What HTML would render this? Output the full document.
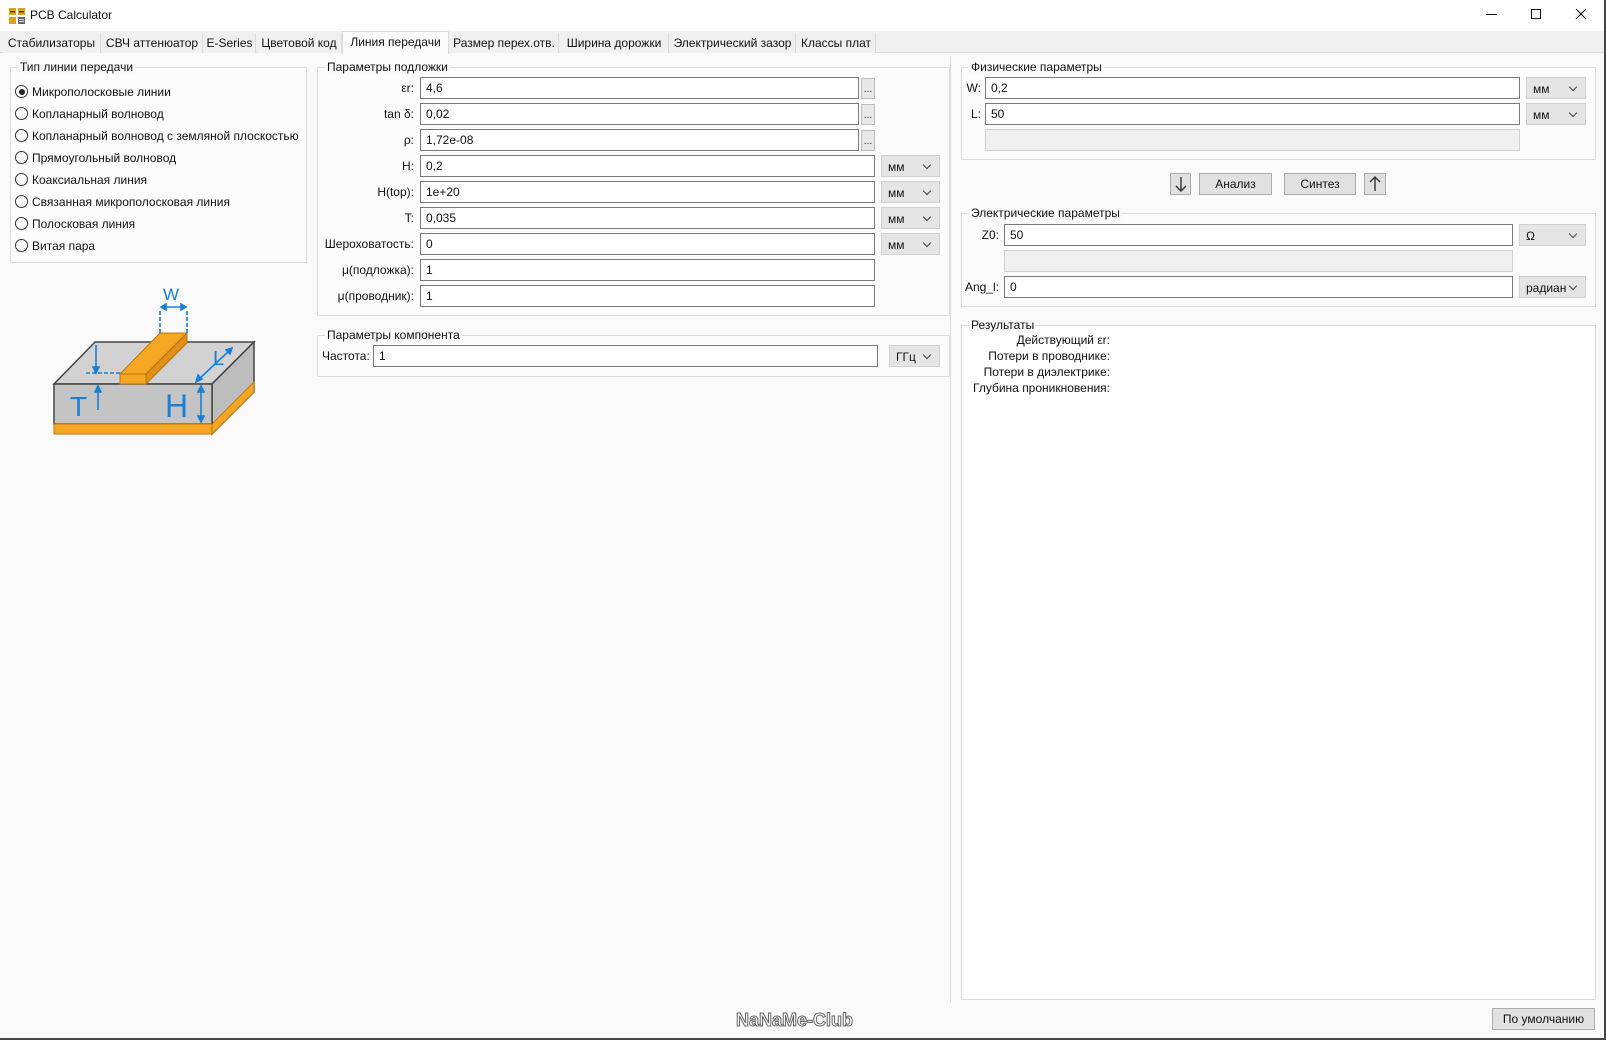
<!DOCTYPE html>
<html><head><meta charset="utf-8"><style>
*{box-sizing:border-box;margin:0;padding:0}
body{width:1606px;height:1040px;background:#fafafa;font-family:"Liberation Sans","DejaVu Sans",sans-serif;font-size:12px;color:#111;position:relative;overflow:hidden}
.a{position:absolute}
.title{left:0;top:0;width:1606px;height:31px;background:#fff}
.tabbar{left:0;top:31px;width:1606px;height:22px;background:#f0f0f0;border-bottom:1px solid #dadada}
.tab{position:absolute;top:2px;height:20px;background:#f0f0f0;border-right:1px solid #dcdcdc;line-height:20px;text-align:center;font-size:12px}
.tab.act{top:0;height:23px;background:#fafafa;border:1px solid #dadada;border-bottom:none}
.grp{position:absolute;border:1px solid #dcdcdc;background:#fcfcfc}
.gt{position:absolute;top:-8px;left:7px;background:#fafafa;padding:0 2px;font-size:12px;line-height:14px}
.inp{position:absolute;height:22px;background:#fff;border:1px solid #7a7a7a;padding-left:5px;line-height:20px;font-size:12px}
.gray{position:absolute;height:22px;background:#f0f0f0;border:1px solid #d0d0d0}
.cb{position:absolute;height:22px;background:#e5e5e5;border:1px solid #d0d0d0;padding-left:6px;line-height:22px;font-size:12px}
.cb:after{content:"";position:absolute;right:9px;top:6px;width:5px;height:5px;border-right:1px solid #444;border-bottom:1px solid #444;transform:rotate(45deg)}
.dots{position:absolute;width:14px;height:21px;background:#e8e8e8;border:1px solid #bcbcbc;font-size:10px;text-align:center;line-height:22px}
.lbl{position:absolute;text-align:right;line-height:22px;font-size:12px}
.rad{position:absolute;left:15px;line-height:14px;font-size:12px}
.rad i{display:inline-block;width:13px;height:13px;border:1px solid #333;border-radius:50%;vertical-align:-2px;margin-right:4px;position:relative;background:#fff}
.rad i.on:after{content:"";position:absolute;left:2.5px;top:2.5px;width:6px;height:6px;border-radius:50%;background:#222}
.btn{position:absolute;height:22px;background:#e1e1e1;border:1px solid #adadad;text-align:center;line-height:20px;font-size:12px}
</style></head><body>
<div class="a title">
 <svg class="a" style="left:9px;top:8px" width="16" height="16"><rect x="0" y="0" width="7" height="7" fill="#e0a020"/><rect x="9" y="0" width="7" height="7" fill="#e0a020"/><rect x="0" y="9" width="7" height="7" fill="#e0a020"/><rect x="9" y="9" width="7" height="7" fill="#666"/><rect x="1" y="3" width="5" height="1.5" fill="#444"/><rect x="10" y="3" width="5" height="1.5" fill="#444"/><rect x="10" y="11" width="5" height="1" fill="#ddd"/><rect x="10" y="13" width="5" height="1" fill="#ddd"/></svg>
 <div class="a" style="left:30px;top:8px;font-size:12px">PCB Calculator</div>
 <div class="a" style="left:1486px;top:14px;width:11px;height:1px;background:#111"></div>
 <div class="a" style="left:1531px;top:9px;width:10px;height:10px;border:1px solid #111"></div>
 <svg class="a" style="left:1575px;top:8px" width="12" height="12"><path d="M1 1L11 11M11 1L1 11" stroke="#111" stroke-width="1.1"/></svg>
</div>
<div class="a tabbar"></div>
<div class="tab" style="left:3px;top:33px;width:98px">Стабилизаторы</div>
<div class="tab" style="left:102px;top:33px;width:101px">СВЧ аттенюатор</div>
<div class="tab" style="left:204px;top:33px;width:52px">E-Series</div>
<div class="tab" style="left:257px;top:33px;width:85px">Цветовой код</div>
<div class="tab act" style="left:342px;top:31px;width:107px">Линия передачи</div>
<div class="tab" style="left:450px;top:33px;width:109px">Размер перех.отв.</div>
<div class="tab" style="left:560px;top:33px;width:109px">Ширина дорожки</div>
<div class="tab" style="left:670px;top:33px;width:126px">Электрический зазор</div>
<div class="tab" style="left:797px;top:33px;width:79px">Классы плат</div>

<!-- left group -->
<div class="grp" style="left:10px;top:67px;width:297px;height:196px"><div class="gt">Тип линии передачи</div></div>
<div class="rad" style="top:85px"><i class="on"></i>Микрополосковые линии</div>
<div class="rad" style="top:107px"><i></i>Копланарный волновод</div>
<div class="rad" style="top:129px"><i></i>Копланарный волновод с земляной плоскостью</div>
<div class="rad" style="top:151px"><i></i>Прямоугольный волновод</div>
<div class="rad" style="top:173px"><i></i>Коаксиальная линия</div>
<div class="rad" style="top:195px"><i></i>Связанная микрополосковая линия</div>
<div class="rad" style="top:217px"><i></i>Полосковая линия</div>
<div class="rad" style="top:239px"><i></i>Витая пара</div>

<svg class="a" style="left:0;top:270px" width="310" height="180" viewBox="0 270 310 180">
 <polygon points="54,384 95,342 254,342 212,384" fill="#d2d2d2" stroke="#444" stroke-width="1.5"/>
 <polygon points="212,384 254,342 254,392 212,434" fill="#bdbdbd" stroke="#444" stroke-width="1.5"/>
 <polygon points="212,424 254,382 254,392 212,434" fill="#f5a623" stroke="#c07a10"/>
 <rect x="54" y="384" width="158" height="40" fill="#c4c4c4" stroke="#444" stroke-width="1.5"/>
 <rect x="54" y="424" width="158" height="10" fill="#f5a623" stroke="#c07a10"/>
 <polygon points="120,374 160,333 187,333 146,374" fill="#f5a623" stroke="#b87510"/>
 <polygon points="146,374 187,333 187,343 146,384" fill="#e0901a" stroke="#b87510"/>
 <rect x="120" y="374" width="26" height="10" fill="#f5a623" stroke="#b87510"/>
 <g stroke="#1a7fd4" stroke-width="1.6" fill="#1a7fd4">
  <path d="M160 333V310M187 333V310" stroke-dasharray="4 2" fill="none"/>
  <path d="M162 307H185" fill="none"/><path d="M161 307l5-3v6zM186 307l-5-3v6z"/>
  <path d="M86 373H120" stroke-dasharray="4 2" fill="none"/>
  <path d="M96 345V370" fill="none"/><path d="M96 373l-3-6h6z"/>
  <path d="M98 410V390" fill="none"/><path d="M98 386l-3 6h6z"/>
  <path d="M201 390V418" fill="none"/><path d="M201 386l-3 6h6zM201 422l-3-6h6z"/>
  <path d="M198 380L230 350" fill="none"/><path d="M196 382l2-7 4 4zM232 348l-6 2 4 4z"/>
 </g>
 <g fill="#1a7fd4" font-family="Liberation Sans,sans-serif">
  <text x="163" y="300" font-size="17">W</text>
  <text x="213" y="365" font-size="20">L</text>
  <text x="70" y="416" font-size="28">T</text>
  <text x="165" y="417" font-size="32">H</text>
 </g>
</svg>

<!-- middle group -->
<div class="grp" style="left:317px;top:67px;width:633px;height:249px"><div class="gt">Параметры подложки</div></div>
<div class="lbl" style="left:320px;width:94px;top:77px">εr:</div><div class="inp" style="left:420px;top:77px;width:439px">4,6</div><div class="dots" style="left:861px;top:78px">...</div>
<div class="lbl" style="left:320px;width:94px;top:103px">tan δ:</div><div class="inp" style="left:420px;top:103px;width:439px">0,02</div><div class="dots" style="left:861px;top:104px">...</div>
<div class="lbl" style="left:320px;width:94px;top:129px">ρ:</div><div class="inp" style="left:420px;top:129px;width:439px">1,72e-08</div><div class="dots" style="left:861px;top:130px">...</div>
<div class="lbl" style="left:320px;width:94px;top:155px">H:</div><div class="inp" style="left:420px;top:155px;width:455px">0,2</div><div class="cb" style="left:881px;top:155px;width:59px">мм</div>
<div class="lbl" style="left:320px;width:94px;top:181px">H(top):</div><div class="inp" style="left:420px;top:181px;width:455px">1e+20</div><div class="cb" style="left:881px;top:181px;width:59px">мм</div>
<div class="lbl" style="left:320px;width:94px;top:207px">T:</div><div class="inp" style="left:420px;top:207px;width:455px">0,035</div><div class="cb" style="left:881px;top:207px;width:59px">мм</div>
<div class="lbl" style="left:320px;width:94px;top:233px">Шероховатость:</div><div class="inp" style="left:420px;top:233px;width:455px">0</div><div class="cb" style="left:881px;top:233px;width:59px">мм</div>
<div class="lbl" style="left:320px;width:94px;top:259px">μ(подложка):</div><div class="inp" style="left:420px;top:259px;width:455px">1</div>
<div class="lbl" style="left:320px;width:94px;top:285px">μ(проводник):</div><div class="inp" style="left:420px;top:285px;width:455px">1</div>

<div class="grp" style="left:317px;top:335px;width:633px;height:42px"><div class="gt">Параметры компонента</div></div>
<div class="lbl" style="left:322px;top:345px">Частота:</div><div class="inp" style="left:373px;top:345px;width:505px">1</div><div class="cb" style="left:889px;top:345px;width:51px">ГГц</div>

<!-- right -->
<div class="a" style="left:950px;top:56px;width:1px;height:946px;background:#dcdcdc"></div>
<div class="grp" style="left:961px;top:67px;width:635px;height:93px"><div class="gt">Физические параметры</div></div>
<div class="lbl" style="left:962px;width:19px;top:77px">W:</div><div class="inp" style="left:985px;top:77px;width:535px">0,2</div><div class="cb" style="left:1526px;top:77px;width:60px">мм</div>
<div class="lbl" style="left:962px;width:19px;top:103px">L:</div><div class="inp" style="left:985px;top:103px;width:535px">50</div><div class="cb" style="left:1526px;top:103px;width:60px">мм</div>
<div class="gray" style="left:985px;top:129px;width:535px"></div>

<div class="btn" style="left:1170px;top:173px;width:21px"><svg width="12" height="18" style="margin-top:1px"><path d="M6 2V16M1 11l5 5 5-5" stroke="#333" stroke-width="1.4" fill="none"/></svg></div>
<div class="btn" style="left:1199px;top:173px;width:73px">Анализ</div>
<div class="btn" style="left:1284px;top:173px;width:72px">Синтез</div>
<div class="btn" style="left:1364px;top:173px;width:22px"><svg width="12" height="18" style="margin-top:1px"><path d="M6 16V2M1 7l5-5 5 5" stroke="#333" stroke-width="1.4" fill="none"/></svg></div>

<div class="grp" style="left:961px;top:213px;width:635px;height:94px"><div class="gt">Электрические параметры</div></div>
<div class="lbl" style="left:962px;width:37px;top:224px">Z0:</div><div class="inp" style="left:1004px;top:224px;width:509px">50</div><div class="cb" style="left:1519px;top:224px;width:67px">Ω</div>
<div class="gray" style="left:1004px;top:250px;width:509px"></div>
<div class="lbl" style="left:962px;width:37px;top:276px">Ang_l:</div><div class="inp" style="left:1004px;top:276px;width:509px">0</div><div class="cb" style="left:1519px;top:276px;width:67px">радиан</div>

<div class="grp" style="left:961px;top:325px;width:635px;height:675px;background:#fff"><div class="gt">Результаты</div></div>
<div class="lbl" style="left:962px;width:148px;top:332px;line-height:16px">Действующий εr:<br>Потери в проводнике:<br>Потери в диэлектрике:<br>Глубина проникновения:</div>

<div class="a" style="left:736px;top:1010px;font-size:18px;font-weight:bold;color:#fff;-webkit-text-stroke:1px #666;letter-spacing:0px">NaNaMe-Club</div>
<div class="btn" style="left:1492px;top:1008px;width:103px">По умолчанию</div>
<div class="a" style="left:1604px;top:0;width:2px;height:1040px;background:#444"></div>
<div class="a" style="left:0;top:1038px;width:1606px;height:2px;background:#444"></div>
</body></html>
